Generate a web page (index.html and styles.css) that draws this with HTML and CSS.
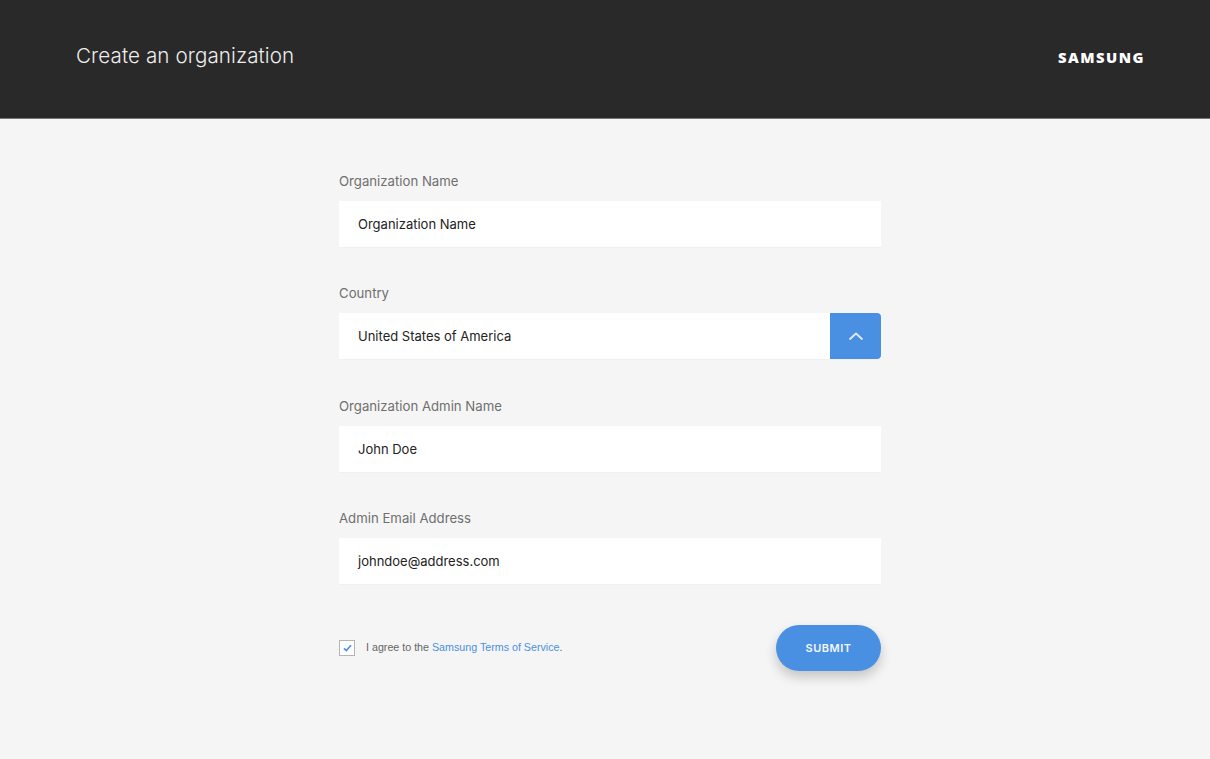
FILE: index.html
```html
<!DOCTYPE html>
<html lang="en">
<head>
<meta charset="utf-8">
<title>Create an organization</title>
<link rel="stylesheet" href="styles.css">
</head>
<body>
<header class="topbar">
  <h1 class="title">Create an organization</h1>
  <div class="logo">SAMSUNG</div>
</header>
<main class="page">
  <form class="form">
    <div class="field">
      <label class="label">Organization Name</label>
      <div class="input">Organization Name</div>
    </div>
    <div class="field">
      <label class="label">Country</label>
      <div class="input select">
        <span class="select-value">United States of America</span>
        <span class="select-btn">
          <svg width="14" height="8" viewBox="0 0 14 8" fill="none"><path d="M1 7L7 1.5L13 7" stroke="#dfeafa" stroke-width="1.8" stroke-linecap="round" stroke-linejoin="round"/></svg>
        </span>
      </div>
    </div>
    <div class="field">
      <label class="label">Organization Admin Name</label>
      <div class="input">John Doe</div>
    </div>
    <div class="field">
      <label class="label">Admin Email Address</label>
      <div class="input">johndoe@address.com</div>
    </div>
    <div class="actions">
      <div class="agree">
        <span class="check">
          <svg width="9" height="8" viewBox="0 0 9 8" fill="none"><path d="M1 4.4L3.3 6.5L8 1.2" stroke="#4a90e2" stroke-width="1.6"/></svg>
        </span>
        <span class="agree-text">I agree to the <a class="link">Samsung Terms of Service</a>.</span>
      </div>
      <div class="submit">SUBMIT</div>
    </div>
  </form>
</main>
</body>
</html>
```

FILE: styles.css
```css
* { box-sizing: border-box; }
html, body { margin: 0; height: 100%; }
body {
  background: #f5f5f5;
  font-family: "Inter", "Noto Sans", sans-serif;
  overflow: hidden;
}
.topbar {
  height: 119px;
  background: #292929;
  border-bottom: 1px solid #777;
  padding: 0 65px 7px 76px;
  display: flex;
  align-items: center;
  justify-content: space-between;
}
.title {
  margin: 0;
  font-size: 20.6px;
  font-weight: 300;
  color: #eee;
  letter-spacing: 0.1px;
}
.logo {
  font-family: "Open Sans", sans-serif;
  font-weight: 800;
  font-size: 14.8px;
  letter-spacing: 1.5px;
  color: #fff;
  margin-top: 2px;
}
.page { padding: 54px 0 0 339px; }
.form { width: 542px; }
.field { height: 112.4px; }
.label {
  display: block;
  height: 28px;
  line-height: 16px;
  font-size: 13.2px;
  color: #6f6f6f;
}
.input {
  height: 46px;
  background: #fff;
  padding-left: 19px;
  display: flex;
  align-items: center;
  font-size: 13px;
  font-weight: 400;
  color: #222;
  box-shadow: 0 1px 1px rgba(0,0,0,0.02);
}
.select { padding-right: 0; justify-content: space-between; }
.select-btn {
  width: 51px;
  height: 46px;
  background: #4a90e2;
  border-radius: 0 4px 4px 0;
  display: flex;
  align-items: center;
  justify-content: center;
}
.actions {
  display: flex;
  align-items: center;
  justify-content: space-between;
  margin-top: 2px;
}
.agree { display: flex; align-items: center; gap: 11px; }
.check {
  width: 16px;
  height: 16px;
  background: #fff;
  border: 1px solid #b5b5b5;
  display: flex;
  align-items: center;
  justify-content: center;
}
.agree-text {
  font-family: "Liberation Sans", sans-serif;
  font-size: 10.7px;
  color: #666;
  margin-top: -2px;
}
.link { color: #4a90e2; }
.submit {
  width: 105px;
  height: 46px;
  border-radius: 23px;
  background: #4a90e2;
  color: #f2f7fd;
  font-size: 11px;
  font-weight: 600;
  letter-spacing: 0.5px;
  display: flex;
  align-items: center;
  justify-content: center;
  box-shadow: 0 6px 12px rgba(0,0,0,0.2);
}
```
